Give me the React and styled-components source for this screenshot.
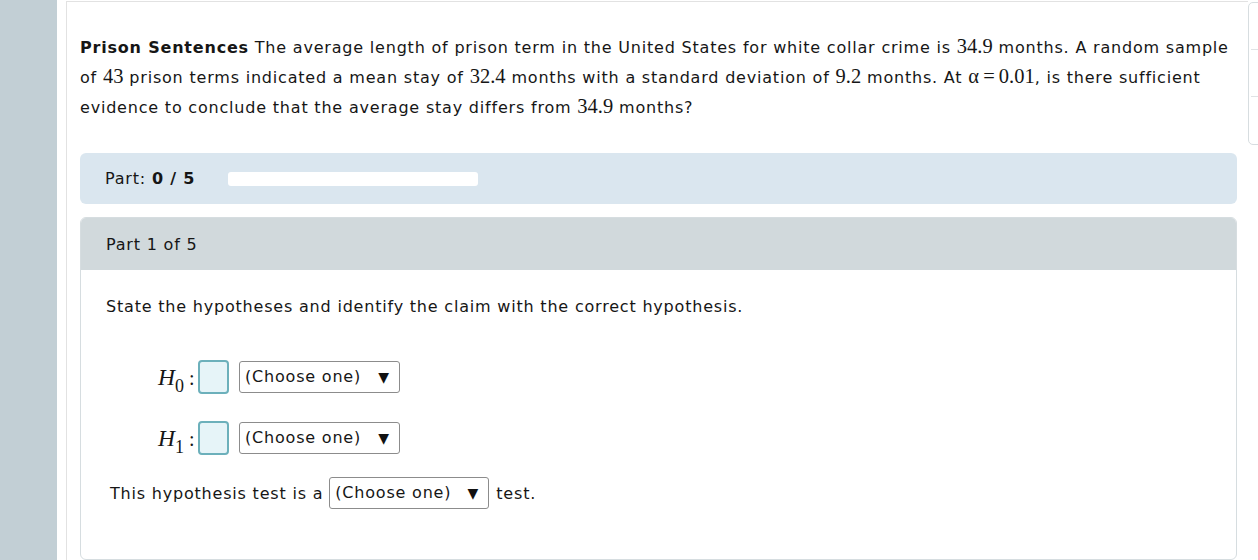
import React from 'react'
import styled, { createGlobalStyle } from 'styled-components'

const GlobalStyle = createGlobalStyle`
  html, body {
    margin: 0;
    padding: 0;
    background: #ffffff;
  }
  body {
    font-family: "DejaVu Sans", Verdana, sans-serif;
    font-size: 16px;
    letter-spacing: 0.8px;
    color: #161616;
    overflow: hidden;
  }
`

const Page = styled.div`
  position: relative;
  display: flex;
  gap: 9px;
  width: 1258px;
  height: 560px;
  overflow: hidden;
`

const Sidebar = styled.div`
  width: 57px;
  flex-shrink: 0;
  background: #c2cfd5;
`

const Card = styled.div`
  width: 1182px;
  margin-top: 1px;
  border-top: 1px solid #e2e2e2;
  border-left: 1px solid #e2e2e2;
  padding: 31px 11px 0 13px;
  box-sizing: border-box;
`

const Problem = styled.p`
  margin: 0;
  line-height: 30px;
`

const Math = styled.span`
  font-family: "Liberation Serif", "Times New Roman", serif;
  font-size: 20.5px;
  letter-spacing: 0;
  line-height: 1;
`

const Progress = styled.div`
  display: flex;
  align-items: center;
  height: 51px;
  margin-top: 30px;
  padding-left: 25px;
  background: #dae6ef;
  border-radius: 6px;
`

const ProgressLabel = styled.span`
  width: 123px;
  b {
    font-weight: bold;
  }
`

const ProgressBar = styled.div`
  width: 250px;
  height: 14px;
  background: #ffffff;
  border-radius: 3px;
`

const PartPanel = styled.div`
  margin-top: 13px;
  border: 1px solid #d6dde0;
  border-radius: 6px;
  overflow: hidden;
`

const PartHeader = styled.div`
  display: flex;
  align-items: center;
  height: 52px;
  padding-left: 25px;
  background: #d1d9dc;
`

const PartBody = styled.div`
  padding: 22px 25px 50px 25px;
`

const Instruction = styled.div`
  line-height: 30px;
`

const HypRow = styled.div`
  display: flex;
  align-items: center;
  height: 34px;
  margin-top: ${p => p.gap}px;
  padding-left: 52px;
`

const HLabel = styled.span`
  display: inline-block;
  width: 40px;
  font-family: "Liberation Serif", "Times New Roman", serif;
  font-size: 23.5px;
  letter-spacing: 0;
  line-height: 34px;
  color: #161616;

  i {
    font-style: italic;
  }
  sub {
    font-size: 18px;
    vertical-align: -7px;
    line-height: 0;
    margin-left: 0;
  }
  span {
    margin-left: 5px;
    font-size: 20px;
  }
`

const AnswerBox = styled.div`
  width: 31px;
  height: 34px;
  box-sizing: border-box;
  border: 2px solid #6cb0bb;
  border-radius: 4px;
  background: #e6f4f8;
`

const Select = styled.div`
  display: inline-flex;
  align-items: center;
  justify-content: space-between;
  width: ${p => p.width}px;
  height: 32px;
  margin-left: ${p => p.left}px;
  padding: 0 10px 0 5px;
  box-sizing: border-box;
  border: 1px solid #8c8c8c;
  border-radius: 3px;
  background: #ffffff;
  line-height: 1;
`

const Arrow = styled.span`
  font-size: 14px;
  letter-spacing: 0;
  color: #111;
`

const TestRow = styled.div`
  display: flex;
  align-items: center;
  height: 32px;
  margin-top: 22px;
  padding-left: 4px;
`

const TestWord = styled.span`
  margin-left: 7px;
`

const SidePanel = styled.div`
  position: absolute;
  left: 1248px;
  top: 2px;
  width: 30px;
  height: 143px;
  box-sizing: border-box;
  border: 1px solid #d7dde0;
  border-radius: 5px;
  display: flex;
  flex-direction: column;
`

const SideSlot = styled.div`
  height: 46px;
  margin-left: 2px;
  border-bottom: ${p => (p.last ? 'none' : '1px solid #dfe3e5')};
`

function ChooseOne({ width = 161, left = 0 }) {
  return (
    <Select width={width} left={left}>
      <span>(Choose one)</span>
      <Arrow>▼</Arrow>
    </Select>
  )
}

function Hypothesis({ index, gap }) {
  return (
    <HypRow gap={gap}>
      <HLabel>
        <i>H</i>
        <sub>{index}</sub>
        <span>:</span>
      </HLabel>
      <AnswerBox />
      <ChooseOne left={10} />
    </HypRow>
  )
}

export default function App() {
  return (
    <>
      <GlobalStyle />
      <Page>
        <Sidebar />
        <Card>
          <Problem>
            <b>Prison Sentences</b> The average length of prison term in the
            United States for white collar crime is <Math>34.9</Math> months. A
            random sample of <Math>43</Math> prison terms indicated a mean stay
            of <Math>32.4</Math> months with a standard deviation of{' '}
            <Math>9.2</Math> months. At <Math>α&thinsp;=&thinsp;0.01</Math>, is
            there sufficient evidence to conclude that the average stay differs
            from <Math>34.9</Math> months?
          </Problem>

          <Progress>
            <ProgressLabel>
              Part: <b>0 / 5</b>
            </ProgressLabel>
            <ProgressBar />
          </Progress>

          <PartPanel>
            <PartHeader>Part 1 of 5</PartHeader>
            <PartBody>
              <Instruction>
                State the hypotheses and identify the claim with the correct
                hypothesis.
              </Instruction>
              <Hypothesis index={0} gap={38} />
              <Hypothesis index={1} gap={27} />
              <TestRow>
                This hypothesis test is a
                <ChooseOne width={160} left={6} />
                <TestWord>test.</TestWord>
              </TestRow>
            </PartBody>
          </PartPanel>
        </Card>
        <SidePanel>
          <SideSlot />
          <SideSlot />
          <SideSlot last />
        </SidePanel>
      </Page>
    </>
  )
}
